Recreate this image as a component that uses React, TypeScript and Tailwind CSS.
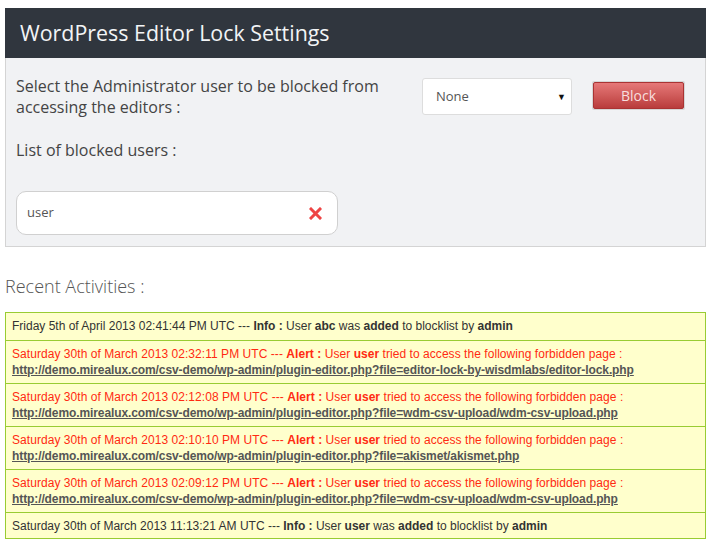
import React from "react";

const Link = ({ children }: { children: React.ReactNode }) => (
  <a className="font-bold text-[#555] underline tracking-[-0.1px]">{children}</a>
);

function AlertRow({ date, file }: { date: string; file: string }) {
  return (
    <div className="border-t border-[#9c3] px-[6px] pt-[5px] pb-[5px] text-[#ff2a12]">
      <div className="tracking-[0.05px]">
        {date} --- <b>Alert :</b> User <b>user</b> tried to access the following forbidden page :
      </div>
      <div>
        <Link>http://demo.mirealux.com/csv-demo/wp-admin/plugin-editor.php?file={file}</Link>
      </div>
    </div>
  );
}

export default function App() {
  return (
    <div className="min-h-[554px] bg-white pt-[8px] pl-[5px]" style={{ width: 716 }}>
      <div className="w-[701px]">
        <div className="h-[50px] bg-[#30363e] pl-[15px] flex items-center">
          <span
            className="text-[21.4px] text-[#f2f4f6]"
            style={{ fontFamily: '"Open Sans", sans-serif', fontWeight: 400 }}
          >
            WordPress Editor Lock Settings
          </span>
        </div>
        <div
          className="border border-t-0 border-[#d4d4d4] bg-[#f1f2f4] pl-[10px] pt-[18px] pb-[11px]"
          style={{ fontFamily: '"Open Sans", sans-serif' }}
        >
          <div className="flex items-start">
            <div className="w-[372px] text-[16px] leading-[21px] text-[#444]">
              Select the Administrator user to be blocked from accessing the editors :
            </div>
            <div className="ml-[34px] mt-[2px] flex h-[37px] w-[150px] items-center justify-between rounded-[3px] border border-[#ddd] bg-white pl-[13px] pr-[5px]">
              <span className="text-[13px] text-[#555]">None</span>
              <span className="text-[9px] text-[#111]">▼</span>
            </div>
            <div className="ml-[20px] mt-[5px] rounded-[2px] bg-[#d6d6d6] p-px">
              <div className="flex h-[27px] w-[91px] items-center justify-center rounded-[2px] border border-[#a33] bg-gradient-to-b from-[#e67878] to-[#b93c3c] text-[14px] text-[#f8dede]">
                Block
              </div>
            </div>
          </div>
          <div className="mt-[22px] text-[16px] leading-[21px] text-[#444]">List of blocked users :</div>
          <div className="mt-[30px] flex h-[44px] w-[322px] items-center justify-between rounded-[10px] border border-[#d0d0d0] bg-white pl-[10px] pr-[15px]">
            <span className="text-[13px] text-[#555]">user</span>
            <svg width="13" height="13" viewBox="0 0 13 13">
              <path d="M2 2 L11 11 M11 2 L2 11" stroke="#ee4444" strokeWidth="3" strokeLinecap="square" />
            </svg>
          </div>
        </div>

        <div
          className="mt-[27px] text-[18px] leading-[24px] text-[#555]"
          style={{ fontFamily: '"Open Sans", sans-serif', fontWeight: 300 }}
        >
          Recent Activities :
        </div>

        <div
          className="mt-[14px] border border-t-0 border-[#9c3] bg-[#ffffcc] text-[12px] leading-[16px] text-[#333]"
          style={{ fontFamily: '"Liberation Sans", Arial, sans-serif' }}
        >
          <div className="border-t border-[#9c3] px-[6px] pt-[5px] pb-[6px]">
            Friday 5th of April 2013 02:41:44 PM UTC --- <b>Info :</b> User <b>abc</b> was <b>added</b> to blocklist by <b>admin</b>
          </div>
          <AlertRow date="Saturday 30th of March 2013 02:32:11 PM UTC" file="editor-lock-by-wisdmlabs/editor-lock.php" />
          <AlertRow date="Saturday 30th of March 2013 02:12:08 PM UTC" file="wdm-csv-upload/wdm-csv-upload.php" />
          <AlertRow date="Saturday 30th of March 2013 02:10:10 PM UTC" file="akismet/akismet.php" />
          <AlertRow date="Saturday 30th of March 2013 02:09:12 PM UTC" file="wdm-csv-upload/wdm-csv-upload.php" />
          <div className="border-t border-[#9c3] px-[6px] pt-[5px] pb-[4px]">
            Saturday 30th of March 2013 11:13:21 AM UTC --- <b>Info :</b> User <b>user</b> was <b>added</b> to blocklist by <b>admin</b>
          </div>
        </div>
      </div>
    </div>
  );
}
